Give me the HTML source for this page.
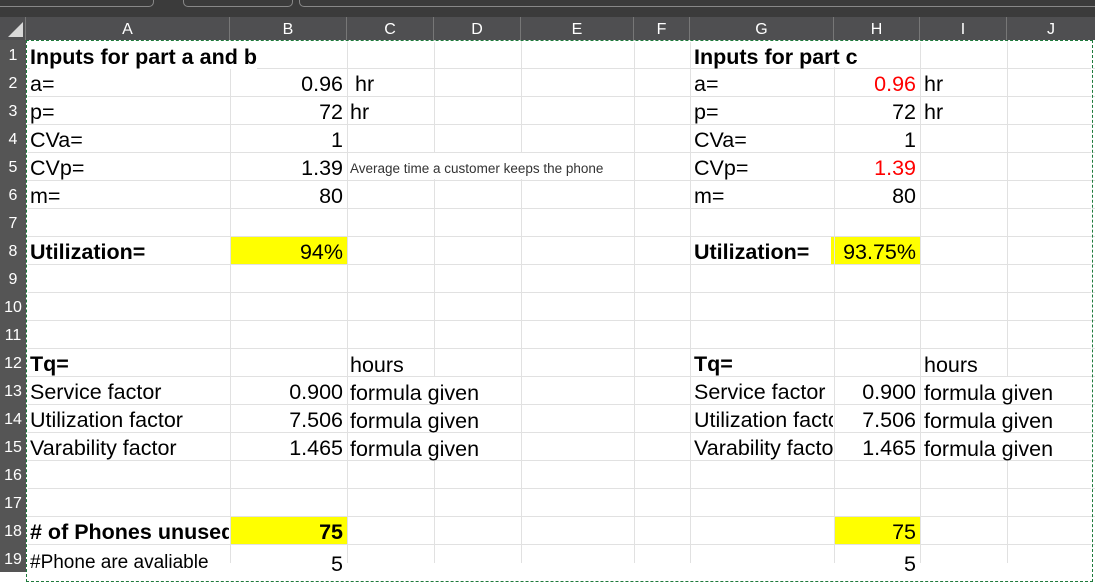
<!DOCTYPE html>
<html><head><style>
body{margin:0;width:1095px;height:563px;overflow:hidden;background:#fff;font-family:"Liberation Sans",Arial,sans-serif;position:relative}
.a{position:absolute;white-space:nowrap}
.t{font-size:21.5px;line-height:32px;height:28px;color:#000}
.w{background:#fff}
.b{font-weight:bold}
.r{text-align:right}
.red{color:#ff0000}
.vl{position:absolute;top:40px;height:523px;width:1px;background:#e1e1e1}
.hl{position:absolute;left:26px;width:1069px;height:1px;background:#e1e1e1}
.rn{position:absolute;left:0;width:26px;height:28px;line-height:32px;color:#fff;font-size:16px;text-align:center;background:#555;}
.ch{position:absolute;top:17px;height:23px;line-height:25px;color:#fff;font-size:16px;text-align:center;border-right:1px solid #777}
</style></head><body>
<div class="a" style="left:0;top:0;width:1095px;height:17px;background:#3b3b3b"></div>
<div class="a" style="left:-10px;top:-8px;width:162px;height:13px;border:1px solid #888;border-radius:5px"></div>
<div class="a" style="left:183px;top:-8px;width:108px;height:13px;border:1px solid #888;border-radius:5px"></div>
<div class="a" style="left:299px;top:-8px;width:810px;height:13px;border:1px solid #888;border-radius:5px"></div>
<div class="a" style="left:0;top:17px;width:1095px;height:23px;background:#4f4f51"></div>
<div class="a" style="left:0;top:17px;width:25px;height:23px;border-right:1px solid #777"></div>
<svg class="a" style="left:6px;top:22px" width="18" height="16"><polygon points="17,0 17,15 2,15" fill="#d8d8d8"/></svg>
<div class="ch" style="left:26px;width:203px">A</div>
<div class="ch" style="left:230px;width:116px">B</div>
<div class="ch" style="left:347px;width:86px">C</div>
<div class="ch" style="left:434px;width:86px">D</div>
<div class="ch" style="left:521px;width:112px">E</div>
<div class="ch" style="left:634px;width:55px">F</div>
<div class="ch" style="left:690px;width:143px">G</div>
<div class="ch" style="left:834px;width:85px">H</div>
<div class="ch" style="left:920px;width:86px">I</div>
<div class="ch" style="left:1007px;width:88px;border:none">J</div>
<div class="a" style="left:0;top:40px;width:26px;height:523px;background:#555"></div>
<div class="rn" style="top:40px">1</div><div class="rn" style="top:68px">2</div><div class="rn" style="top:96px">3</div><div class="rn" style="top:124px">4</div><div class="rn" style="top:152px">5</div><div class="rn" style="top:180px">6</div><div class="rn" style="top:208px">7</div><div class="rn" style="top:236px">8</div><div class="rn" style="top:264px">9</div><div class="rn" style="top:292px">10</div><div class="rn" style="top:320px">11</div><div class="rn" style="top:348px">12</div><div class="rn" style="top:376px">13</div><div class="rn" style="top:404px">14</div><div class="rn" style="top:432px">15</div><div class="rn" style="top:460px">16</div><div class="rn" style="top:488px">17</div><div class="rn" style="top:516px">18</div><div class="rn" style="top:544px">19</div>
<div class="a" style="left:230px;top:236px;width:117px;height:28px;background:#ffff00"></div>
<div class="a" style="left:831px;top:236px;width:89px;height:28px;background:#ffff00"></div>
<div class="a" style="left:230px;top:516px;width:117px;height:28px;background:#ffff00"></div>
<div class="a" style="left:834px;top:516px;width:86px;height:28px;background:#ffff00"></div>
<div class="vl" style="left:230px"></div><div class="vl" style="left:347px"></div><div class="vl" style="left:434px"></div><div class="vl" style="left:521px"></div><div class="vl" style="left:634px"></div><div class="vl" style="left:690px"></div><div class="vl" style="left:834px"></div><div class="vl" style="left:920px"></div><div class="vl" style="left:1007px"></div>
<div class="hl" style="top:68px"></div><div class="hl" style="top:96px"></div><div class="hl" style="top:124px"></div><div class="hl" style="top:152px"></div><div class="hl" style="top:180px"></div><div class="hl" style="top:208px"></div><div class="hl" style="top:236px"></div><div class="hl" style="top:264px"></div><div class="hl" style="top:292px"></div><div class="hl" style="top:320px"></div><div class="hl" style="top:348px"></div><div class="hl" style="top:376px"></div><div class="hl" style="top:404px"></div><div class="hl" style="top:432px"></div><div class="hl" style="top:460px"></div><div class="hl" style="top:488px"></div><div class="hl" style="top:516px"></div><div class="hl" style="top:544px"></div>
<div class="a t b w" style="left:30px;top:41px">Inputs for part a and b</div>
<div class="a t" style="left:30px;top:68px">a=</div>
<div class="a t" style="left:30px;top:96px">p=</div>
<div class="a t" style="left:30px;top:124px">CVa=</div>
<div class="a t" style="left:30px;top:152px">CVp=</div>
<div class="a t" style="left:30px;top:180px">m=</div>
<div class="a t b" style="left:30px;top:236px">Utilization=</div>
<div class="a t b" style="left:30px;top:348px">Tq=</div>
<div class="a t" style="left:30px;top:376px">Service factor</div>
<div class="a t" style="left:30px;top:404px">Utilization factor</div>
<div class="a t" style="left:30px;top:432px">Varability factor</div>
<div class="a t b" style="left:30px;top:516px;width:199px;overflow:hidden">&#35; of Phones unused</div>
<div class="a t" style="left:30px;top:545px;font-size:19px;line-height:36px">#Phone are avaliable</div>
<div class="a t r" style="left:230px;width:113px;top:68px">0.96</div>
<div class="a t r" style="left:230px;width:113px;top:96px">72</div>
<div class="a t r" style="left:230px;width:113px;top:124px">1</div>
<div class="a t r" style="left:230px;width:113px;top:152px">1.39</div>
<div class="a t r" style="left:230px;width:113px;top:180px">80</div>
<div class="a t r" style="left:230px;width:113px;top:236px">94%</div>
<div class="a t r" style="left:230px;width:113px;top:376px">0.900</div>
<div class="a t r" style="left:230px;width:113px;top:404px">7.506</div>
<div class="a t r" style="left:230px;width:113px;top:432px">1.465</div>
<div class="a t r b" style="left:230px;width:113px;top:516px">75</div>
<div class="a t r" style="left:230px;width:113px;top:546px;line-height:36px">5</div>
<div class="a t" style="left:355px;top:68px">hr</div>
<div class="a t" style="left:350px;top:96px">hr</div>
<div class="a t w" style="left:350px;top:153px;height:26px;font-size:13.5px;line-height:31px;color:#333">Average time a customer keeps the phone</div>
<div class="a t w" style="left:350px;top:349px;height:26px">hours</div>
<div class="a t w" style="left:350px;top:377px;height:26px">formula given</div>
<div class="a t w" style="left:350px;top:405px;height:26px">formula given</div>
<div class="a t w" style="left:350px;top:433px;height:26px">formula given</div>
<div class="a t b w" style="left:694px;top:41px;height:26px">Inputs for part c</div>
<div class="a t" style="left:694px;top:68px">a=</div>
<div class="a t" style="left:694px;top:96px">p=</div>
<div class="a t" style="left:694px;top:124px">CVa=</div>
<div class="a t" style="left:694px;top:152px">CVp=</div>
<div class="a t" style="left:694px;top:180px">m=</div>
<div class="a t b" style="left:694px;top:236px">Utilization=</div>
<div class="a t b" style="left:694px;top:348px">Tq=</div>
<div class="a t" style="left:694px;top:376px">Service factor</div>
<div class="a t" style="left:694px;top:404px;width:139px;overflow:hidden">Utilization factor</div>
<div class="a t" style="left:694px;top:432px;width:139px;overflow:hidden">Varability factor</div>
<div class="a t r red" style="left:820px;width:96px;top:68px">0.96</div>
<div class="a t r" style="left:820px;width:96px;top:96px">72</div>
<div class="a t r" style="left:820px;width:96px;top:124px">1</div>
<div class="a t r red" style="left:820px;width:96px;top:152px">1.39</div>
<div class="a t r" style="left:820px;width:96px;top:180px">80</div>
<div class="a t r" style="left:820px;width:96px;top:236px">93.75%</div>
<div class="a t r" style="left:820px;width:96px;top:376px">0.900</div>
<div class="a t r" style="left:820px;width:96px;top:404px">7.506</div>
<div class="a t r" style="left:820px;width:96px;top:432px">1.465</div>
<div class="a t r" style="left:820px;width:96px;top:516px">75</div>
<div class="a t r" style="left:820px;width:96px;top:546px;line-height:36px">5</div>
<div class="a t" style="left:924px;top:68px">hr</div>
<div class="a t" style="left:924px;top:96px">hr</div>
<div class="a t w" style="left:924px;top:349px;height:26px">hours</div>
<div class="a t w" style="left:924px;top:377px;height:26px">formula given</div>
<div class="a t w" style="left:924px;top:405px;height:26px">formula given</div>
<div class="a t w" style="left:924px;top:433px;height:26px">formula given</div>
<div class="a" style="left:26px;top:40px;width:1065px;height:540px;border:1px dashed #1e7a3c;outline:1px dashed #fff;outline-offset:-2px"></div>
</body></html>
